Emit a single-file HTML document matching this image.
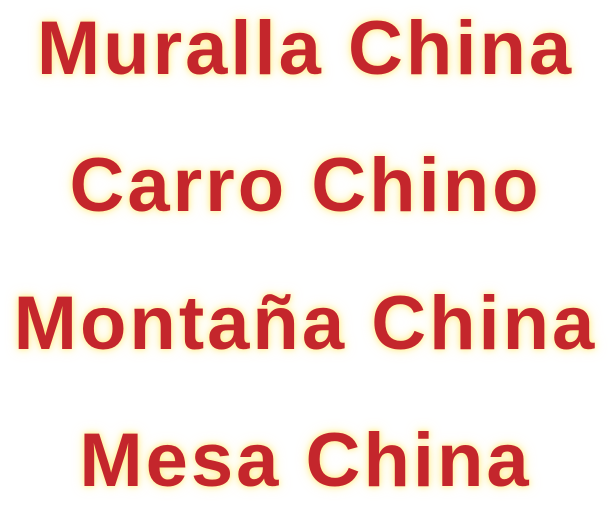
<!DOCTYPE html>
<html><head><style>
html,body{margin:0;padding:0;background:#fff;width:611px;height:507px;overflow:hidden}
div{position:absolute;left:0;width:611px;text-align:center;font-family:"Liberation Sans",sans-serif;font-weight:bold;font-size:76px;line-height:76px;color:#c4262c;letter-spacing:3px;text-shadow:0 0 6px rgba(255,235,120,.9),0 0 12px rgba(255,240,150,.7)}
</style></head><body>
<div style="top:11px">Muralla China</div>
<div style="top:148px">Carro Chino</div>
<div style="top:286px">Montaña China</div>
<div style="top:423px">Mesa China</div>
</body></html>
